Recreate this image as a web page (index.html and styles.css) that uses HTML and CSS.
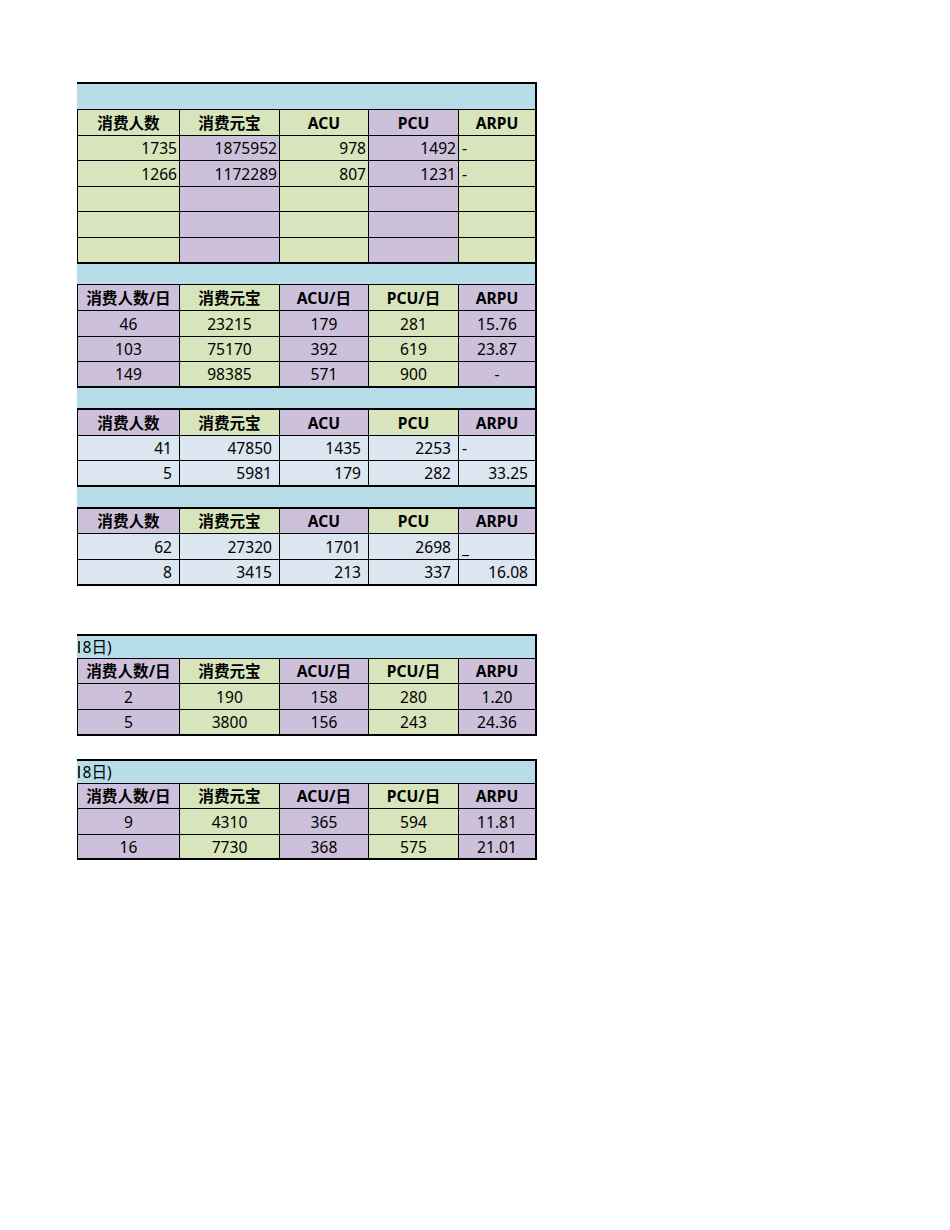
FILE: index.html
```html
<!DOCTYPE html>
<html lang="zh-CN">
<head>
<meta charset="utf-8">
<title>消费统计</title>
<link rel="stylesheet" href="styles.css">
</head>
<body>
<div class="sheet">
  <div class="group">
    <div class="blk">
      <div class="title h26"></div>
      <div class="row h26 bold c">
        <div class="g">消费人数</div><div class="g">消费元宝</div><div class="g">ACU</div><div class="p">PCU</div><div class="g">ARPU</div>
      </div>
      <div class="row h25 r1">
        <div class="g">1735</div><div class="p">1875952</div><div class="g">978</div><div class="p">1492</div><div class="g l">-</div>
      </div>
      <div class="row h26 r1">
        <div class="g">1266</div><div class="p">1172289</div><div class="g">807</div><div class="p">1231</div><div class="g l">-</div>
      </div>
      <div class="row h25 r1">
        <div class="g"></div><div class="p"></div><div class="g"></div><div class="p"></div><div class="g"></div>
      </div>
      <div class="row h26 r1">
        <div class="g"></div><div class="p"></div><div class="g"></div><div class="p"></div><div class="g"></div>
      </div>
      <div class="row h26 r1 last">
        <div class="g"></div><div class="p"></div><div class="g"></div><div class="p"></div><div class="g"></div>
      </div>
    </div>

    <div class="blk">
      <div class="title h21"></div>
      <div class="row h26 bold c">
        <div class="p">消费人数/日</div><div class="g">消费元宝</div><div class="p">ACU/日</div><div class="g">PCU/日</div><div class="p">ARPU</div>
      </div>
      <div class="row h26 c">
        <div class="p">46</div><div class="g">23215</div><div class="p">179</div><div class="g">281</div><div class="p">15.76</div>
      </div>
      <div class="row h25 c">
        <div class="p">103</div><div class="g">75170</div><div class="p">392</div><div class="g">619</div><div class="p">23.87</div>
      </div>
      <div class="row h26 c last">
        <div class="p">149</div><div class="g">98385</div><div class="p">571</div><div class="g">900</div><div class="p">-</div>
      </div>
    </div>

    <div class="blk">
      <div class="title h22 thick"></div>
      <div class="row h26 bold c">
        <div class="p">消费人数</div><div class="g">消费元宝</div><div class="p">ACU</div><div class="g">PCU</div><div class="p">ARPU</div>
      </div>
      <div class="row h25 r2">
        <div class="b">41</div><div class="b">47850</div><div class="b">1435</div><div class="b">2253</div><div class="b l">-</div>
      </div>
      <div class="row h26 r2 last">
        <div class="b">5</div><div class="b">5981</div><div class="b">179</div><div class="b">282</div><div class="b">33.25</div>
      </div>
    </div>

    <div class="blk">
      <div class="title h22 thick"></div>
      <div class="row h25 bold c">
        <div class="p">消费人数</div><div class="g">消费元宝</div><div class="p">ACU</div><div class="g">PCU</div><div class="p">ARPU</div>
      </div>
      <div class="row h26 r2">
        <div class="b">62</div><div class="b">27320</div><div class="b">1701</div><div class="b">2698</div><div class="b l under">_</div>
      </div>
      <div class="row h26 r2 last">
        <div class="b">8</div><div class="b">3415</div><div class="b">213</div><div class="b">337</div><div class="b">16.08</div>
      </div>
    </div>
  </div>

  <div class="group g5">
    <div class="blk">
      <div class="title h23 dated"><span class="date">8日)</span></div>
      <div class="row h25 bold c">
        <div class="p">消费人数/日</div><div class="g">消费元宝</div><div class="p">ACU/日</div><div class="g">PCU/日</div><div class="p">ARPU</div>
      </div>
      <div class="row h26 c">
        <div class="p">2</div><div class="g">190</div><div class="p">158</div><div class="g">280</div><div class="p">1.20</div>
      </div>
      <div class="row h26 c last">
        <div class="p">5</div><div class="g">3800</div><div class="p">156</div><div class="g">243</div><div class="p">24.36</div>
      </div>
    </div>
  </div>

  <div class="group g6">
    <div class="blk">
      <div class="title h23 dated"><span class="date">8日)</span></div>
      <div class="row h25 bold c">
        <div class="p">消费人数/日</div><div class="g">消费元宝</div><div class="p">ACU/日</div><div class="g">PCU/日</div><div class="p">ARPU</div>
      </div>
      <div class="row h26 c">
        <div class="p">9</div><div class="g">4310</div><div class="p">365</div><div class="g">594</div><div class="p">11.81</div>
      </div>
      <div class="row h25 c last">
        <div class="p">16</div><div class="g">7730</div><div class="p">368</div><div class="g">575</div><div class="p">21.01</div>
      </div>
    </div>
  </div>
</div>
</body>
</html>
```

FILE: styles.css
```css
* { box-sizing: border-box; }

html, body {
  margin: 0;
  padding: 0;
  background: #ffffff;
}

body {
  font-family: "Noto Sans", "Noto Sans CJK SC", sans-serif;
  font-size: 15.6px;
  color: #000000;
}

.sheet {
  padding: 82px 0 0 77px;
}

.group {
  width: 460px;
  border-top: 2px solid #000;
}

.g5 { margin-top: 48px; }
.g6 { margin-top: 23px; }

.blk {
  border-right: 2px solid #000;
}

.title {
  background: #b7dee8;
  border-bottom: 1px solid #000;
  white-space: nowrap;
  display: flex;
  align-items: flex-end;
  line-height: 18px;
  padding-bottom: 2px;
}

.title.thick { border-bottom-width: 2px; }

.title.dated {
  padding-left: 1px;
  gap: 3px;
}

/* remnant of the clipped month glyph at the sheet edge */
.title.dated::before {
  content: "";
  width: 1.5px;
  height: 12px;
  margin-bottom: 3px;
  background: #333;
}

.row {
  display: grid;
  grid-template-columns: 102px 100px 89px 90px 76px;
  border-left: 1px solid #000;
  border-bottom: 1px solid #000;
}

.row.last { border-bottom-width: 2px; }

.row > div {
  border-right: 1px solid #000;
  display: flex;
  align-items: center;
  justify-content: flex-end;
  line-height: 18px;
  white-space: nowrap;
}

.row > div:last-child { border-right: none; }

.h21 { height: 21px; }
.h22 { height: 22px; }
.h23 { height: 23px; }
.h25 { height: 25px; }
.h26 { height: 26px; }

.bold { font-weight: 700; }

.c > div { justify-content: center; }

.r1 > div { padding-right: 2px; }
.r2 > div { padding-right: 7px; }

.row > div.l {
  justify-content: flex-start;
  padding-left: 3px;
  padding-right: 0;
}

.row > div.under {
  align-items: flex-end;
  padding-bottom: 2px;
}

.g { background: #d8e4bc; }
.p { background: #ccc0da; }
.b { background: #dce6f1; }
```
